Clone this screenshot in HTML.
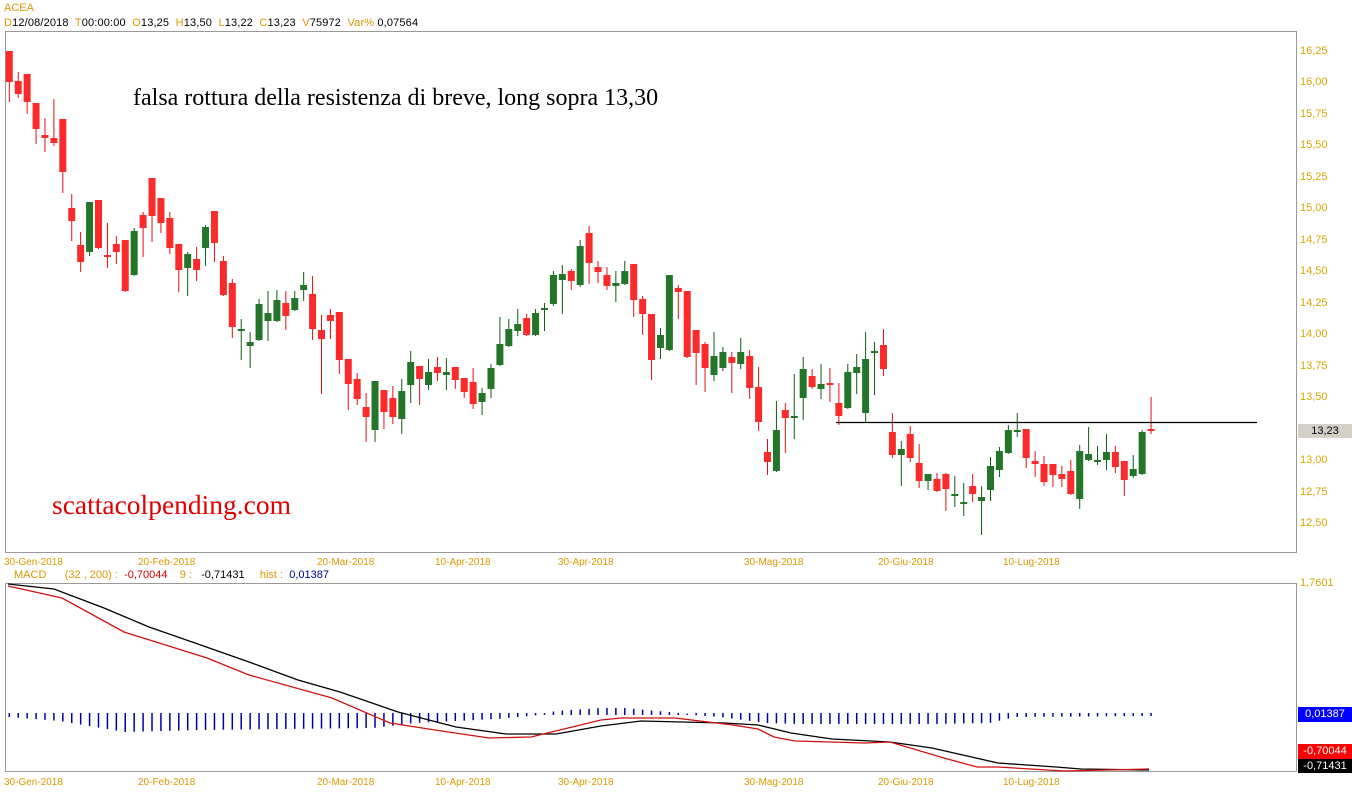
<!DOCTYPE html>
<html><head><meta charset="utf-8">
<style>
html,body{margin:0;padding:0;background:#fff;}
body{width:1352px;height:800px;position:relative;overflow:hidden;font-family:"Liberation Sans",sans-serif;font-size:11px;}
.t{position:absolute;white-space:nowrap;line-height:12px;}
.o{color:#d99a00;}
.y{color:#d4a800;}
svg{position:absolute;left:0;top:0;}
</style></head><body>
<svg id="s" width="1352" height="800" xmlns="http://www.w3.org/2000/svg"></svg>
<div class="t o" style="left:4px;top:2px;">ACEA</div>
<div class="t" style="left:4px;top:17px;letter-spacing:0.15px;"><span class="o">D</span>12/08/2018&nbsp; <span class="o">T</span>00:00:00&nbsp; <span class="o">O</span>13,25&nbsp; <span class="o">H</span>13,50&nbsp; <span class="o">L</span>13,22&nbsp; <span class="o">C</span>13,23&nbsp; <span class="o">V</span>75972&nbsp; <span class="o">Var%</span> 0,07564</div>
<div class="t" style="left:133px;top:84px;font-family:'Liberation Serif',serif;font-size:24px;line-height:28px;color:#000;">falsa rottura della resistenza di breve, long sopra 13,30</div>
<div class="t" style="left:52px;top:490px;font-family:'Liberation Serif',serif;font-size:27.5px;line-height:30px;color:#e00000;">scattacolpending.com</div>
<div class="t" style="left:14px;top:569px;"><span class="o">MACD</span>&nbsp;&nbsp;&nbsp;&nbsp;&nbsp; <span class="o">(32 , 200) :</span>&nbsp; <span style="color:#d00000">-0,70044</span>&nbsp;&nbsp;&nbsp; <span class="o">9 :</span>&nbsp;&nbsp; -0,71431&nbsp;&nbsp;&nbsp;&nbsp; <span class="o">hist :</span>&nbsp; <span style="color:#000090">0,01387</span></div>
<div class="t" style="left:1298px;top:424px;width:54px;height:14px;background:#d4d0c8;color:#000;text-align:center;line-height:14px;">13,23</div>
<div class="t" style="left:1298px;top:707px;width:54px;height:15px;background:#0000ff;color:#fff;text-align:center;line-height:15px;">0,01387</div>
<div class="t" style="left:1298px;top:744px;width:54px;height:15px;background:#ff0000;color:#fff;text-align:center;line-height:15px;">-0,70044</div>
<div class="t" style="left:1298px;top:759px;width:54px;height:14px;background:#000;color:#fff;text-align:center;line-height:14px;">-0,71431</div>
<div class="t y" style="left:1300px;top:577px;">1,7601</div>
<div id="lab"></div>
<script>
var s=document.getElementById('s'),h='';
function L(x1,y1,x2,y2,c,w){h+='<line x1="'+x1+'" y1="'+y1+'" x2="'+x2+'" y2="'+y2+'" stroke="'+c+'" stroke-width="'+(w||1)+'"/>';}
h+='<rect x="5.5" y="31.5" width="1291" height="521" fill="none" stroke="#999"/>';
h+='<rect x="5.5" y="583.5" width="1291" height="188" fill="none" stroke="#999"/>';
var C=[['R',51,82,51,101],['R',81,94,72,97],['R',74,102,74,113],['R',103,129,103,143],['R',135,138,118,151],['R',138,143,99,145],['R',119,172,119,192],['R',208,221,194,240],['R',245,262,232,271],['G',202,252,202,255],['R',200,248,200,248],['R',255,257,223,267],['R',244,252,236,263],['R',240,291,240,291],['G',231,275,228,275],['R',215,228,212,256],['R',178,216,178,241],['R',198,223,198,232],['R',218,248,212,253],['R',244,270,244,291],['G',254,268,252,295],['R',259,270,247,280],['G',227,248,225,265],['R',211,243,211,261],['R',261,295,256,295],['R',283,327,279,337],['G',329,331,319,359],['G',342,346,332,367],['G',304,340,299,340],['G',313,321,291,340],['G',300,321,290,321],['R',303,316,291,329],['G',298,310,291,310],
['G',285,290,272,300],['R',294,329,276,339],['R',330,339,315,393],['R',315,321,309,338],['R',312,360,312,373],['R',359,384,359,409],['R',379,399,373,404],['R',407,417,393,441],['G',381,430,381,441],['R',390,412,390,428],['R',398,417,386,423],['G',391,419,379,433],['G',362,385,351,402],['R',366,379,366,404],['G',372,385,359,389],['R',367,373,357,380],['G',372,375,358,389],['R',367,380,367,388],['R',378,392,378,397],['R',382,404,368,408],['G',393,402,388,414],['G',368,389,364,397],['G',344,365,317,365],['G',329,346,319,346],['G',324,331,309,335],['R',318,335,314,335],['G',313,335,309,335],['G',308,309,303,330],['G',275,304,271,305],['G',274,280,265,313],['R',271,281,269,289],['G',246,285,240,286],['R',233,263,226,283],
['R',267,272,261,282],['R',275,286,267,289],['G',283,286,271,301],['G',271,284,261,284],['R',264,300,264,316],['R',299,314,296,334],['R',314,360,314,379],['G',335,348,328,358],['G',275,350,275,350],['R',288,292,285,318],['R',291,357,291,357],['R',330,353,330,384],['R',344,368,342,391],['G',356,375,332,380],['G',352,368,347,370],['R',357,363,352,392],['G',352,364,338,368],['R',356,388,350,398],['R',387,422,367,430],['R',452,462,439,474],['G',430,471,401,471],['R',410,418,403,452],['G',416,418,374,438],['G',369,398,357,419],['R',376,387,369,388],['G',384,389,364,398],['R',383,384,368,401],['R',403,416,383,424],['G',372,408,364,408],['G',367,373,354,393],['G',359,413,332,422],['G',351,353,342,394],['R',345,369,329,375],
['R',432,455,413,457],['G',449,455,441,485],['R',434,458,426,461],['R',463,481,444,487],['G',474,481,474,489],['R',479,491,473,491],['R',474,489,473,510],['G',494,495,476,506],['G',502,504,483,515],['R',486,494,474,501],['G',497,501,486,534],['G',466,490,457,500],['G',451,470,447,476],['G',430,453,425,453],['G',430,432,413,436],['R',429,458,429,467],['R',461,464,451,476],['R',464,482,456,485],['R',464,475,464,486],['R',474,479,466,486],['R',471,494,460,494],['G',451,499,445,508],['G',454,460,427,460],['G',460,462,446,464],['G',452,460,434,469],['R',452,467,446,472],['R',461,480,461,495],['G',469,476,455,477],['G',432,474,430,474],['R',429,431,397,433]];
function X(i){return 9.3+i*8.92;}
for(var i=0;i<C.length;i++){var c=C[i],x=X(i),col=c[0]=='R'?'#fb2b2b':'#23752a',wc=c[0]=='R'?'#e01010':'#0f5a14';
 L(x,c[3],x,c[4]+1,wc,1);
 var bh=Math.max(2,c[2]-c[1]);h+='<rect x="'+(x-3.5)+'" y="'+c[1]+'" width="7" height="'+bh+'" fill="'+col+'"/>';}
L(836,422.5,1257,422.5,'#000',1.3);
function hv(x){var p=[[8,2],[60,6],[124,17],[200,15],[373,13],[415,8],[497,4],[540,0],[556,-3],[600,-6],[625,-6],[691,0],[720,2],[766,8],[800,9],[932,9],[990,8],[1015,2],[1150,1]];
 for(var k=0;k<p.length-1;k++){if(x<=p[k+1][0]){var t=(x-p[k][0])/(p[k+1][0]-p[k][0]);return p[k][1]+t*(p[k+1][1]-p[k][1]);}}return 1;}
for(var i=0;i<C.length;i++){var x=X(i),v=hv(x);if(v>=0)L(x,713,x,715+v,'#0000a0',1.5);else L(x,715+v-1,x,715,'#0000a0',1.5);}
function P(pts,col){h+='<polyline fill="none" stroke="'+col+'" stroke-width="1.3" points="'+pts+'"/>';}
P('8,584 54,589 104,608 149,627 195,643 249,662 298,680 340,692 398,712 456,727 506,734 556,734 601,726 641,721 724,723 758,725 791,733 832,739 890,742 932,748 998,763 1056,767 1081,769 1149,770','#000');
P('8,586 62,598 124,632 207,658 249,675 332,698 390,723 435,730 489,738 531,737 601,720 621,718 675,718 733,725 758,729 774,737 795,741 865,743 890,742 944,758 977,767 998,767 1064,771 1149,769','#d01010');
s.innerHTML=h;
var lab='',vals=['16,25','16,00','15,75','15,50','15,25','15,00','14,75','14,50','14,25','14,00','13,75','13,50','13,25','13,00','12,75','12,50'];
for(var k=0;k<vals.length;k++){if(vals[k]=='13,25')continue;lab+='<div class="t y" style="left:1300px;top:'+(45+k*31.47)+'px;">'+vals[k]+'</div>';}
var d=[[4,'30-Gen-2018'],[138,'20-Feb-2018'],[317,'20-Mar-2018'],[435,'10-Apr-2018'],[558,'30-Apr-2018'],[744,'30-Mag-2018'],[878,'20-Giu-2018'],[1003,'10-Lug-2018']];
for(var k=0;k<d.length;k++){lab+='<div class="t o" style="left:'+d[k][0]+'px;top:557px;font-size:10px;">'+d[k][1]+'</div>';lab+='<div class="t o" style="left:'+d[k][0]+'px;top:777px;font-size:10px;">'+d[k][1]+'</div>';}
document.getElementById('lab').innerHTML=lab;
</script>
</body></html>
